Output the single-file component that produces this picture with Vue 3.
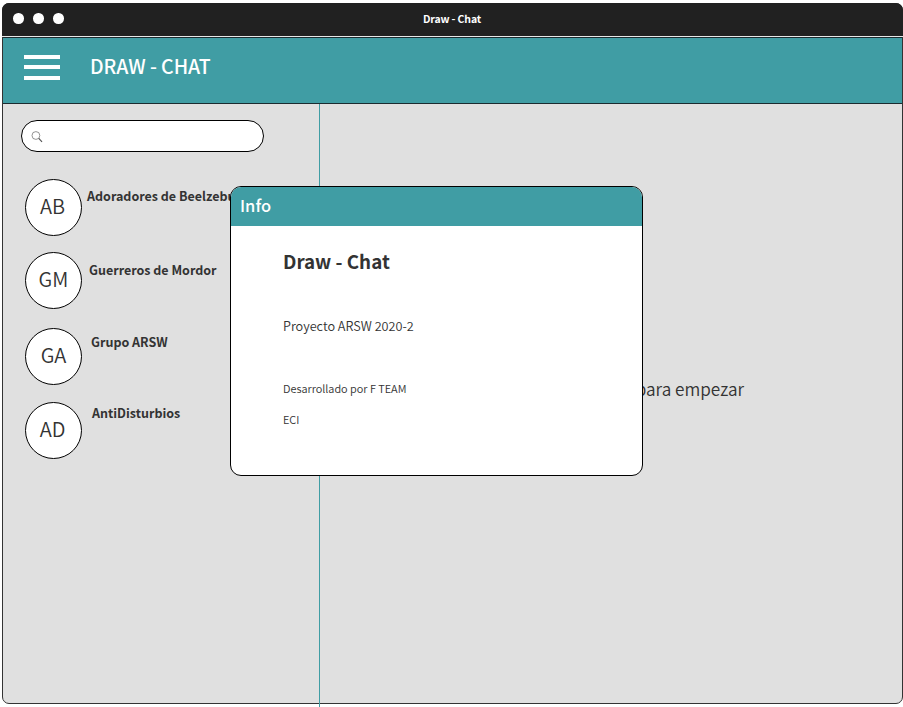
<script setup>
const groups = [
  { initials: 'AB', name: 'Adoradores de Beelzebub', slot: 'first' },
  { initials: 'GM', name: 'Guerreros de Mordor', slot: 'second' },
  { initials: 'GA', name: 'Grupo ARSW', slot: 'third' },
  { initials: 'AD', name: 'AntiDisturbios', slot: 'fourth' },
]
</script>

<template>
  <div class="page">
    <div class="window">
      <div class="titlebar">
        <div class="dots"><i></i><i></i><i></i></div>
        <span class="wintitle">Draw - Chat</span>
      </div>
      <header class="appbar">
        <div class="menu"><i></i><i></i><i></i></div>
        <h1>DRAW - CHAT</h1>
      </header>
      <div class="content">
        <aside>
          <div class="search">
            <svg width="12" height="12" viewBox="0 0 12 12" fill="none" stroke="#777">
              <circle cx="4.9" cy="4.5" r="3.9" stroke-width=".8" />
              <path d="M7.8 7.4 11 10.8" stroke="#555" stroke-width="1.2" />
            </svg>
          </div>
          <ul>
            <li v-for="g in groups" :key="g.initials" :class="g.slot">
              <div class="avatar"><span>{{ g.initials }}</span></div>
              <span class="name">{{ g.name }}</span>
            </li>
          </ul>
        </aside>
        <div class="divider"></div>
        <main><p>Selecciona un grupo para empezar</p></main>
      </div>
    </div>
    <section class="modal">
      <div class="modal-head">Info</div>
      <div class="modal-body">
        <h2>Draw - Chat</h2>
        <p class="project">Proyecto ARSW 2020-2</p>
        <p class="small">Desarrollado por F TEAM</p>
        <p class="small last">ECI</p>
      </div>
    </section>
  </div>
</template>

<style>
body { margin: 0; background: #fff; overflow: hidden; }
</style>

<style scoped>
* { box-sizing: border-box; margin: 0; padding: 0; }
.page { position: relative; width: 903px; height: 707px; padding: 3px 0 0 2px; color: #333; font-family: "Noto Sans CJK SC", "Noto Sans", sans-serif; white-space: nowrap; }
.window { width: 901px; height: 701px; border: 1px solid #333; border-radius: 7px; background: #e0e0e0; display: flex; flex-direction: column; }
.titlebar { flex: none; height: 34px; margin: -1px -1px 0; padding: 0 12px 0 11px; border-bottom: 1px solid #e8e8e8; border-radius: 7px 7px 0 0; background: #212121; display: grid; grid-template-columns: 1fr auto 1fr; }
.dots { display: flex; gap: 9.5px; padding-top: 10px; }
.dots i { width: 10.5px; height: 10.5px; border-radius: 50%; background: #fff; }
.wintitle { color: #fff; font-size: 10.5px; font-weight: 700; line-height: 31px; letter-spacing: -.14px; }
.appbar { flex: none; height: 67px; background: #409da4; border-top: 1px solid #1b2b30; border-bottom: 1px solid #1b2b30; display: flex; padding-left: 21px; }
.menu { width: 36px; margin-top: 17px; display: flex; flex-direction: column; gap: 6px; }
.menu i { height: 4px; background: #fff; }
.menu i:last-child { margin-top: 1px; }
h1 { margin-left: 30px; color: #fff; font-size: 19.5px; font-weight: 500; line-height: 56px; letter-spacing: -.07px; }
.content { flex: 1; display: flex; height: 599px; }
aside { flex: none; width: 316px; }
.divider { flex: none; width: 1px; height: 603px; background: #409da4; }
.search { width: 243px; height: 32px; margin: 16px 0 0 18px; border: 1px solid #000; border-radius: 16px; background: #fff; padding: 10px 0 0 9px; }
.search svg { display: block; }
ul { list-style: none; padding: 27px 0 0 22px; }
li { height: 57px; display: flex; }
.avatar { flex: none; width: 57px; height: 57px; border: 1px solid #000; border-radius: 50%; background: #fff; color: #333; text-align: center; font-size: 20px; font-weight: 350; line-height: 51px; }
.first .avatar, .fourth .avatar { padding-right: 2px; }
.name { font-size: 12.5px; font-weight: 700; line-height: 18px; }
.first .name { margin: 8px 0 0 5px; }
.second { margin-top: 16px; }
.second .name { margin: 9px 0 0 7px; }
.third { margin-top: 19px; }
.third .name { margin: 5px 0 0 9px; }
.fourth { margin-top: 17px; }
.fourth .name { margin: 2px 0 0 10px; }
main { flex: 1; display: flex; justify-content: flex-end; padding: 273px 158px 0 0; }
main p { color: #333; font-size: 17.2px; font-weight: 350; line-height: 24px; }
.modal { position: absolute; left: 230px; top: 186px; width: 413px; height: 290px; border: 1px solid #000; border-radius: 11px; background: #fff; overflow: hidden; }
.modal-head { height: 39px; background: #409da4; color: #fff; font-size: 16.5px; font-weight: 500; line-height: 36px; padding-left: 9px; }
.modal-body { padding: 20px 52px 0; }
h2 { font-size: 18.8px; font-weight: 700; line-height: 30px; }
.project { color: #333; font-size: 12.7px; font-weight: 350; line-height: 20px; margin-top: 40px; }
.small { color: #333; font-size: 10.9px; font-weight: 350; line-height: 18px; margin-top: 43px; }
.last { margin-top: 13px; }
</style>
